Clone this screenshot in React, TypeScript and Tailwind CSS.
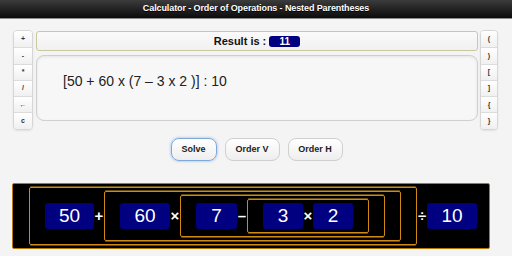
import React from "react";

const leftKeys = ["+", "-", "*", "/", "←", "c"];
const rightKeys = ["(", ")", "[", "]", "{", "}"];

function KeyColumn({ keys, className }: { keys: string[]; className: string }) {
  return (
    <div className={`flex flex-col rounded-[4px] border border-[#d6d6d6] overflow-hidden shadow-[0_1px_2px_rgba(0,0,0,0.08)] ${className}`}>
      {keys.map((k, i) => (
        <div
          key={k}
          className={`h-[16.3px] flex items-center justify-center bg-gradient-to-b from-white to-[#f0f0f0] text-[7px] font-bold text-[#333] ${i > 0 ? "border-t border-[#dcdcdc]" : ""}`}
        >
          {k}
        </div>
      ))}
    </div>
  );
}

function Num({ v, w }: { v: string; w: string }) {
  return (
    <div className={`${w} h-[26px] shrink-0 rounded-[3px] bg-[#000080] text-white text-[19px] flex items-center justify-center leading-none`}>
      {v}
    </div>
  );
}

function Op({ v }: { v: string }) {
  return <div className="w-[10px] shrink-0 text-center text-white text-[15px] font-bold leading-none">{v}</div>;
}

function Group({ children }: { children: React.ReactNode }) {
  return (
    <div className="shrink-0 flex items-center border border-[#d08a10] rounded-[2px] px-[15px] py-[3px] shadow-[0_-2px_0_-1px_#6a4a08,0_2px_0_-1px_#6a4a08]">
      {children}
    </div>
  );
}

export default function App() {
  return (
    <div className="w-[512px] h-[256px] overflow-hidden bg-[#f4f4f4] font-['Liberation_Sans',Arial,sans-serif]">
      {/* header */}
      <div className="h-[19px] bg-gradient-to-b from-[#3c3c3c] to-[#0c0c0c] border-b border-[#8c8c8c] flex items-center justify-center">
        <span className="text-white text-[9px] font-bold tracking-[-0.1px] [text-shadow:0_1px_0_#000]">
          Calculator - Order of Operations - Nested Parentheses
        </span>
      </div>

      {/* calculator */}
      <div className="flex mt-[11px]">
        <KeyColumn keys={leftKeys} className="ml-[13px] w-[20px]" />
        <div className="ml-[3px] w-[442px] flex flex-col">
          <div className="mt-[1px] h-[20px] rounded-[3px] border border-[#c9c9a0] bg-gradient-to-b from-[#fafafa] to-[#f1f1f1] flex items-center justify-center gap-[3px]">
            <span className="text-[11px] font-bold text-[#111]">Result is :</span>
            <span className="h-[11px] w-[31px] rounded-[3px] bg-[#000080] text-white text-[10px] font-bold flex items-center justify-center">
              11
            </span>
          </div>
          <div className="mt-[4px] h-[66px] rounded-[8px] border border-[#cfcfcf] bg-[#f7f7f7] shadow-[inset_0_1px_3px_rgba(0,0,0,0.08)] pl-[26px] pt-[13px]">
            <span className="text-[14px] text-[#222]">[50 + 60 x (7 – 3 x 2 )] : 10</span>
          </div>
        </div>
        <KeyColumn keys={rightKeys} className="ml-[2px] w-[18px]" />
      </div>

      {/* action buttons */}
      <div className="mt-[8px] flex justify-center gap-[8px] pl-[1px]">
        <button className="w-[46px] h-[23px] rounded-[8px] border border-[#7fa8dc] shadow-[0_0_3px_#8fb4e6] bg-gradient-to-b from-white to-[#eeeeee] text-[9px] font-bold text-[#222]">
          Solve
        </button>
        <button className="w-[55px] h-[23px] rounded-[8px] border border-[#cfcfcf] bg-gradient-to-b from-white to-[#eeeeee] text-[9px] font-bold text-[#222]">
          Order V
        </button>
        <button className="w-[55px] h-[23px] rounded-[8px] border border-[#cfcfcf] bg-gradient-to-b from-white to-[#eeeeee] text-[9px] font-bold text-[#222]">
          Order H
        </button>
      </div>

      {/* nested boxes */}
      <div className="mt-[22px] ml-[12px] w-[478px] h-[66px] bg-black border border-[#b87808] rounded-[2px] flex items-center pl-[16px]">
        <Group>
          <Num v="50" w="w-[49px]" />
          <Op v="+" />
          <Group>
            <Num v="60" w="w-[50px]" />
            <Op v="×" />
            <Group>
              <Num v="7" w="w-[41px]" />
              <Op v="–" />
              <Group>
                <Num v="3" w="w-[40px]" />
                <Op v="×" />
                <Num v="2" w="w-[40px]" />
              </Group>
            </Group>
          </Group>
        </Group>
        <Op v="÷" />
        <Num v="10" w="w-[50px]" />
      </div>
    </div>
  );
}
